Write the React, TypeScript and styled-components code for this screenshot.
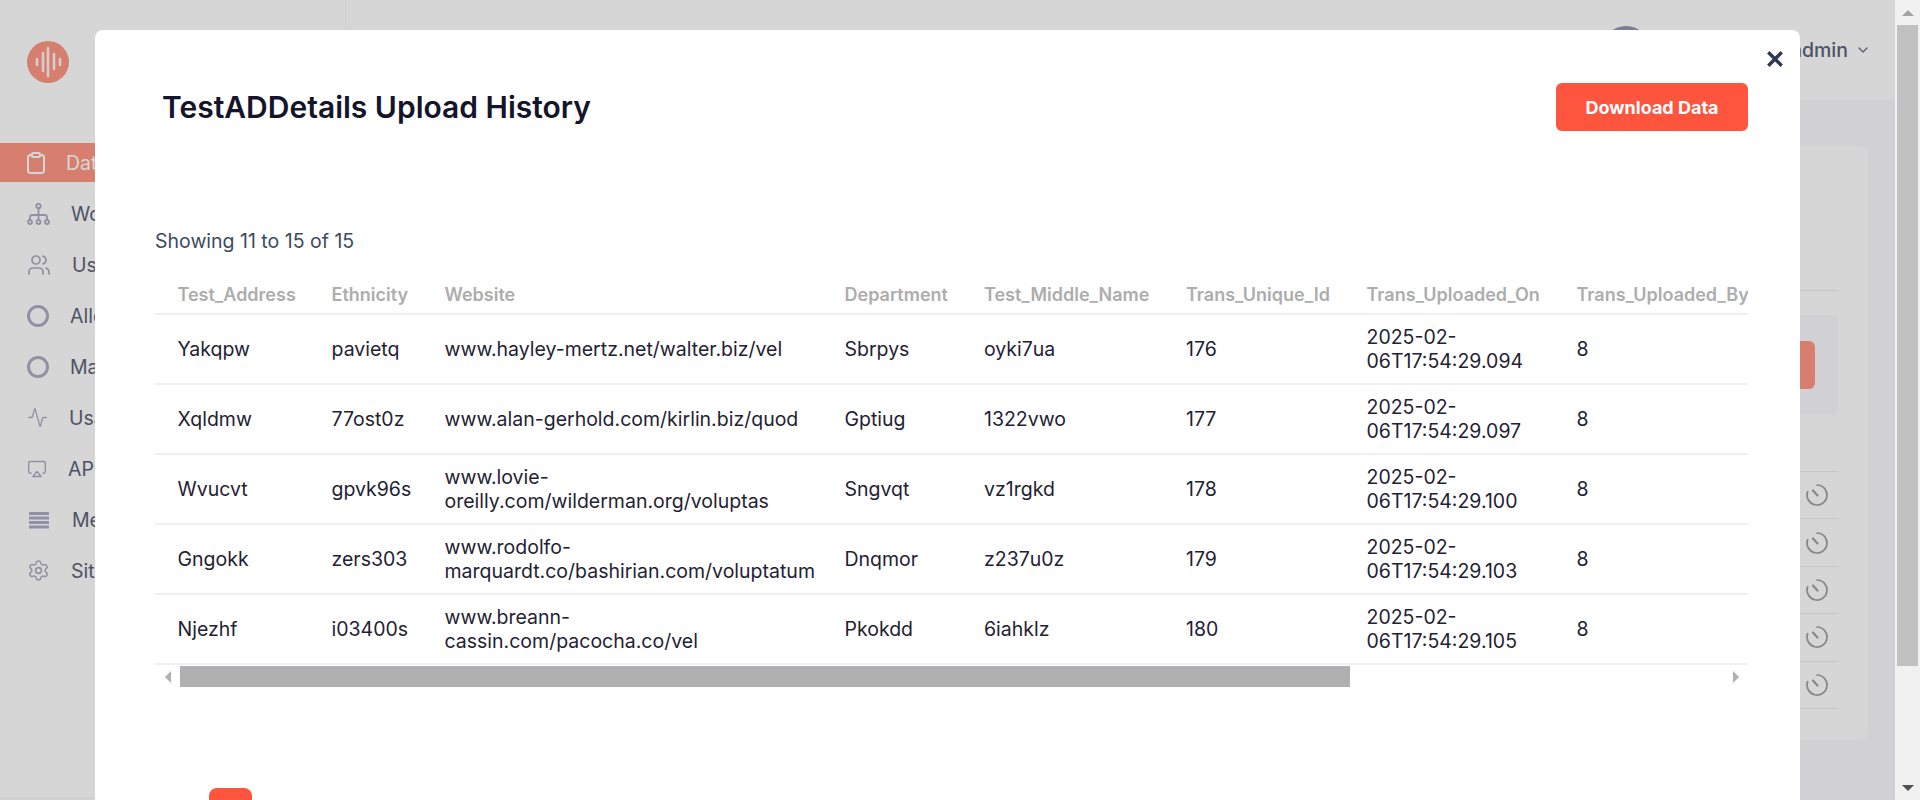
import React from "react";
import styled, { createGlobalStyle } from "styled-components";
import { Activity, Airplay, ChevronDown, Settings, Users } from "lucide-react";

const Global = createGlobalStyle`
  html, body { margin: 0; padding: 0; height: 100%; overflow: hidden; background: #fff; }
  body { font-family: Inter, "Noto Sans", sans-serif; }
  * { box-sizing: border-box; }
`;

const Shell = styled.div`display: flex; width: 1920px; height: 800px; overflow: hidden;`;
const Page = styled.div`position: relative; display: flex; width: 1895px; height: 800px; overflow: hidden; background: #f9fafd;`;

const Sidebar = styled.aside`
  width: 346px; height: 797px; flex: none; background: #fff; border-right: 1px solid #f9f9f9;
  display: flex; flex-direction: column; padding-top: 41px;
`;
const Logo = styled.svg`width: 42px; height: 42px; margin-left: 27px; margin-bottom: 60px; flex: none;`;
const Nav = styled.nav`display: flex; flex-direction: column; gap: 12px;`;
const NavItem = styled.a<{ $active?: boolean }>`
  display: flex; align-items: center; gap: 21px; height: 39px; padding-left: 27px;
  font-size: 19.5px; color: ${(p) => (p.$active ? "#fff" : "#5c6479")};
  background: ${(p) => (p.$active ? "#ff9884" : "transparent")};
  svg { flex: none; color: ${(p) => (p.$active ? "#fff" : "#aeacc4")}; }
`;
const RingIcon = styled.span`width: 22px; height: 22px; flex: none; border-radius: 50%; border: 3px solid #aeacc4;`;

const Main = styled.main`flex: 1; min-width: 0; display: flex; flex-direction: column;`;
const Header = styled.header`
  height: 100px; flex: none; background: #fff; display: flex; align-items: center; justify-content: flex-end;
  gap: 7px; padding-right: 24px;
`;
const Avatar = styled.div`width: 48px; height: 48px; border-radius: 50%; background: #9296b0;`;
const UserName = styled.span`min-width: 191px; text-align: right; font-size: 19.5px; font-weight: 500; color: #5c6479;`;
const Content = styled.div`flex: 1; padding: 46px 27px 0 40px;`;
const Card = styled.section`background: #fff; border-radius: 8px; padding: 0 30px 31px; height: 594px;`;
const CardHead = styled.div`height: 145px; border-bottom: 1px solid #eceef2;`;
const ActionPanel = styled.div`
  height: 100px; margin-top: 24px; padding-right: 23px; background: #f9fafd; border-radius: 6px;
  display: flex; justify-content: flex-end; align-items: center;
`;
const UploadButton = styled.div`width: 160px; height: 48px; border-radius: 6px; background: #ff9884;`;
const HistoryList = styled.div`margin-top: 56px; border-top: 1px solid #eceef2;`;
const HistoryRow = styled.div`
  height: 47.4px; border-bottom: 1px solid #eceef2; display: flex; align-items: center; justify-content: flex-end;
  padding-right: 9px; color: #a3a3a3;
`;

const Overlay = styled.div`position: absolute; inset: 0; background: rgba(0, 0, 0, 0.16); overflow: hidden; padding: 30px 0 0 95px;`;
const Modal = styled.div`position: relative; width: 1705px; min-height: 900px; background: #fff; border-radius: 8px; padding-top: 53px;`;
const CloseButton = styled.button`
  position: absolute; top: 21px; right: 17px; width: 16px; height: 16px; padding: 0; border: 0; background: none;
  color: #2c3a4f; display: flex;
`;
const ModalHead = styled.div`display: flex; align-items: center; justify-content: space-between; padding: 0 52px 0 67px;`;
const Title = styled.h2`margin: 0; font-size: 30px; font-weight: 600; color: #14142b;`;
const DownloadButton = styled.button`
  width: 192px; height: 48px; border: 0; border-radius: 6px; background: #ff543d; color: #fff;
  font-family: inherit; font-size: 18px; font-weight: 700;
`;
const ModalBody = styled.div`padding: 97px 52px 0 60px;`;
const Showing = styled.div`font-size: 19.5px; line-height: 26px; color: #3d4b5f;`;
const TableClip = styled.div`margin-top: 21px; overflow: hidden; width: 100%;`;
const Table = styled.table`border-collapse: collapse; table-layout: fixed; width: 1880px;`;
const Th = styled.th`
  height: 39px; padding: 0 22px 0 22.5px; text-align: left; font-size: 18px; font-weight: 600; color: #adadad;
  border-bottom: 2px solid #eff0f6; white-space: nowrap;
`;
const Td = styled.td`
  height: 70px; padding: 0 20px 0 22.5px; font-size: 19.5px; line-height: 24px; color: #1f2233;
  border-bottom: 2px solid #eff0f6;
`;
const HScroll = styled.div`display: flex; align-items: center; height: 21px; margin-top: 1px;`;
const HArrowCell = styled.div`width: 25px; display: flex; justify-content: center; flex: none;`;
const HThumb = styled.div`width: 1170px; height: 21px; background: #b0b0b0; flex: none;`;
const HSpacer = styled.div`flex: 1;`;
const ArrowLeft = styled.i`width: 0; height: 0; border-style: solid; border-width: 6px 6px 6px 0; border-color: transparent #b0b0b0 transparent transparent;`;
const ArrowRight = styled.i`width: 0; height: 0; border-style: solid; border-width: 6px 0 6px 6px; border-color: transparent transparent transparent #b0b0b0;`;
const PageButton = styled.button`
  display: block; width: 43px; height: 40px; margin: 101px 0 0 54px; border: 0; border-radius: 8px;
  background: #ff543d;
`;

const VScroll = styled.div`width: 25px; flex: none; height: 800px; background: #f1f1f1; padding: 0 2px; display: flex; flex-direction: column; align-items: stretch;`;
const VArrowCell = styled.div`height: 25px; flex: none; display: flex; align-items: center; justify-content: center;`;
const VThumb = styled.div`height: 641px; flex: none; background: #c1c1c1;`;
const VSpacer = styled.div`flex: 1;`;
const ArrowUp = styled.i`width: 0; height: 0; border-style: solid; border-width: 0 6px 6px; border-color: transparent transparent #a3a3a3;`;
const ArrowDown = styled.i`width: 0; height: 0; border-style: solid; border-width: 6px 6px 0; border-color: #505050 transparent transparent;`;

const columns = ["Test_Address", "Ethnicity", "Website", "Department", "Test_Middle_Name", "Trans_Unique_Id", "Trans_Uploaded_On", "Trans_Uploaded_By"];
const widths = [154, 113, 400, 139.5, 202, 180.5, 210, 481];
const rows = [
  ["Yakqpw", "pavietq", "www.hayley-mertz.net/walter.biz/vel", "Sbrpys", "oyki7ua", "176", "2025-02-06T17:54:29.094", "8"],
  ["Xqldmw", "77ost0z", "www.alan-gerhold.com/kirlin.biz/quod", "Gptiug", "1322vwo", "177", "2025-02-06T17:54:29.097", "8"],
  ["Wvucvt", "gpvk96s", "www.lovie-oreilly.com/wilderman.org/voluptas", "Sngvqt", "vz1rgkd", "178", "2025-02-06T17:54:29.100", "8"],
  ["Gngokk", "zers303", "www.rodolfo-marquardt.co/bashirian.com/voluptatum", "Dnqmor", "z237u0z", "179", "2025-02-06T17:54:29.103", "8"],
  ["Njezhf", "i03400s", "www.breann-cassin.com/pacocha.co/vel", "Pkokdd", "6iahklz", "180", "2025-02-06T17:54:29.105", "8"],
];

const ClipboardIcon = () => (
  <svg width="18" height="22" viewBox="0 0 18 22" fill="none" stroke="currentColor" strokeWidth="2">
    <rect x="1" y="3" width="16" height="18" rx="2.5" />
    <rect x="5" y="1" width="8" height="4" rx="1.2" fill="#ff9884" />
  </svg>
);
const TreeIcon = () => (
  <svg width="23" height="24" viewBox="0 0 23 24" fill="none" stroke="currentColor" strokeWidth="1.8">
    <circle cx="11.5" cy="4" r="2.2" />
    <path d="M11.5 6.2V18M3 18v-2.5a2.5 2.5 0 0 1 2.5-2.5h12a2.5 2.5 0 0 1 2.5 2.5V18" />
    <circle cx="3" cy="20" r="2" />
    <circle cx="11.5" cy="20" r="2" />
    <circle cx="20" cy="20" r="2" />
  </svg>
);
const BarsIcon = () => (
  <svg width="24" height="18" viewBox="0 0 24 18" fill="currentColor">
    <rect x="2" y="1" width="20" height="3" rx=".5" />
    <rect x="2" y="5.5" width="20" height="3" rx=".5" />
    <rect x="2" y="10" width="20" height="3" rx=".5" />
    <rect x="2" y="14.5" width="20" height="3" rx=".5" />
  </svg>
);
const TimerIcon = () => (
  <svg width="24" height="24" viewBox="0 0 24 24" fill="none" stroke="currentColor" strokeLinecap="round">
    <path d="M12 2A10 10 0 1 1 2.6 8.6" strokeWidth="1.7" />
    <path d="M12.5 12.5 8 7.5" strokeWidth="2.2" />
  </svg>
);
const CloseIcon = () => (
  <svg width="16" height="16" viewBox="0 0 16 16" stroke="currentColor" strokeWidth="3.4" strokeLinecap="square">
    <path d="M2.5 2.5l11 11M13.5 2.5l-11 11" />
  </svg>
);

export default function App() {
  return (
    <Shell>
      <Global />
      <Page>
        <Sidebar>
          <Logo viewBox="0 0 42 42">
            <circle cx="21" cy="21" r="21" fill="#ff9884" />
            <g stroke="#fff" strokeWidth="2.6" strokeLinecap="round" opacity=".9">
              <path d="M10 18v6M16 12v18M21 7v28M27 13v15M33 18v6" />
            </g>
          </Logo>
          <Nav>
            <NavItem $active><ClipboardIcon />Datasets</NavItem>
            <NavItem><TreeIcon />Workflows</NavItem>
            <NavItem><Users size={24} strokeWidth={1.7} />Users</NavItem>
            <NavItem><RingIcon />Allocation</NavItem>
            <NavItem><RingIcon />Masking</NavItem>
            <NavItem><Activity size={21} strokeWidth={1.5} />Usage</NavItem>
            <NavItem><Airplay size={20} strokeWidth={1.7} />API</NavItem>
            <NavItem><BarsIcon />Menu</NavItem>
            <NavItem><Settings size={23} strokeWidth={1.6} />Site Settings</NavItem>
          </Nav>
        </Sidebar>
        <Main>
          <Header>
            <Avatar />
            <UserName>Sysadmin</UserName>
            <ChevronDown size={16} color="#6b7280" />
          </Header>
          <Content>
            <Card>
              <CardHead />
              <ActionPanel><UploadButton /></ActionPanel>
              <HistoryList>
                {rows.map((r) => (
                  <HistoryRow key={r[5]}><TimerIcon /></HistoryRow>
                ))}
              </HistoryList>
            </Card>
          </Content>
        </Main>
        <Overlay>
          <Modal>
            <CloseButton aria-label="Close"><CloseIcon /></CloseButton>
            <ModalHead>
              <Title>TestADDetails Upload History</Title>
              <DownloadButton>Download Data</DownloadButton>
            </ModalHead>
            <ModalBody>
              <Showing>Showing 11 to 15 of 15</Showing>
              <TableClip>
                <Table>
                  <colgroup>
                    {widths.map((w, i) => <col key={i} width={w} />)}
                  </colgroup>
                  <thead>
                    <tr>{columns.map((c) => <Th key={c}>{c}</Th>)}</tr>
                  </thead>
                  <tbody>
                    {rows.map((r) => (
                      <tr key={r[5]}>{r.map((v, i) => <Td key={i}>{v}</Td>)}</tr>
                    ))}
                  </tbody>
                </Table>
              </TableClip>
              <HScroll>
                <HArrowCell><ArrowLeft /></HArrowCell>
                <HThumb />
                <HSpacer />
                <HArrowCell><ArrowRight /></HArrowCell>
              </HScroll>
              <PageButton aria-label="Page 3" />
            </ModalBody>
          </Modal>
        </Overlay>
      </Page>
      <VScroll>
        <VArrowCell><ArrowUp /></VArrowCell>
        <VThumb />
        <VSpacer />
        <VArrowCell><ArrowDown /></VArrowCell>
      </VScroll>
    </Shell>
  );
}
